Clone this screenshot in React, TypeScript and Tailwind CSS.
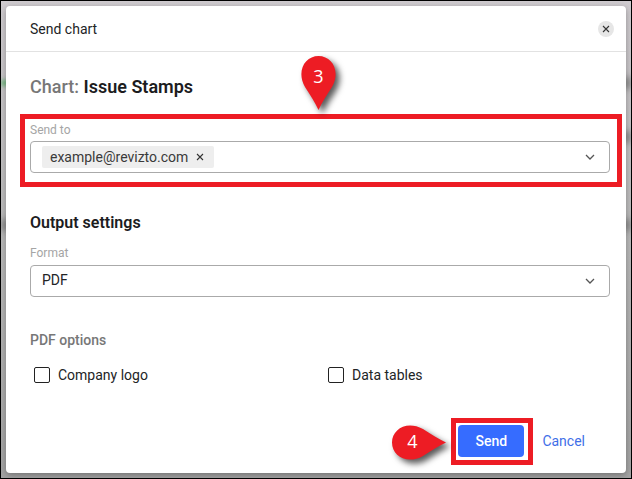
import { useState } from "react";
import type { ReactNode } from "react";

function Chevron() {
  return (
    <svg width="10" height="6" viewBox="0 0 10 6" fill="none" stroke="#555" strokeWidth="1.3" aria-hidden="true">
      <path d="M1 1 5 5 9 1" />
    </svg>
  );
}

function Cross() {
  return (
    <svg width="8" height="8" viewBox="0 0 8 8" fill="none" stroke="#333" strokeWidth="1.1" aria-hidden="true">
      <path d="m1 1 6 6M7 1 1 7" />
    </svg>
  );
}

function Option({ id, children }: { id: string; children: ReactNode }) {
  return (
    <div className="flex items-center gap-2 pl-1">
      <input
        id={id}
        type="checkbox"
        className="size-4 appearance-none rounded-xs border border-[#222] bg-white checked:bg-[#366cff]"
      />
      <label htmlFor={id} className="text-sm">
        {children}
      </label>
    </div>
  );
}

export default function App() {
  const [recipients, setRecipients] = useState(["example@revizto.com"]);

  return (
    <main className="relative min-h-screen overflow-hidden border border-black bg-linear-to-b from-[#cfcbcf] via-[#b9b9b9] to-[#a3a3a3] p-[5px] font-[Roboto,sans-serif] text-[#222426]">
      <span className="absolute top-[79px] left-0 h-1.5 w-2 bg-[#6fb57c] blur-[2px]" />
      <span className="absolute top-[218px] left-0 h-3 w-2 bg-[#888] blur-[3px]" />
      <span className="absolute top-[76px] right-0 h-3 w-2 bg-[#888] blur-[3px]" />
      <span className="absolute top-[130px] right-0 h-3 w-2 bg-[#888] blur-[3px]" />
      <span className="absolute top-[218px] right-0 h-3 w-2 bg-[#888] blur-[3px]" />

      <section
        role="dialog"
        aria-labelledby="title"
        className="relative rounded-[4px] bg-white pb-4 shadow-[0_2px_6px_rgba(0,0,0,0.3)]"
      >
        <header className="flex h-[46px] items-center justify-between border-b border-[#e2e2e2] pr-3 pl-6">
          <h1 id="title" className="text-sm">Send chart</h1>
          <button type="button" aria-label="Close" className="flex size-4 items-center justify-center rounded-full bg-[#e6e6e6]">
            <Cross />
          </button>
        </header>

        <form className="pt-[23px] pr-4 pl-6" onSubmit={(e) => e.preventDefault()}>
          <h2 className="text-lg leading-6 font-medium text-[#777]">
            Chart: <span className="font-semibold text-[#1c1c1e]">Issue Stamps</span>
          </h2>

          <div className="relative mt-[23px]">
            <label htmlFor="recipient" className="block text-xs leading-4 text-[#a5a5a5]">Send to</label>
            <div className="mt-[3px] flex h-8 items-center rounded-[4px] border border-[#aaa] pr-3.5 pl-[11px]">
              {recipients.map((mail) => (
                <span key={mail} className="flex h-[22px] items-center gap-2 rounded-xs bg-[#eee] px-2 pr-2.5 text-sm text-[#3a3a3a]">
                  {mail}
                  <button type="button" aria-label="Remove" onClick={() => setRecipients(recipients.filter((m) => m !== mail))}>
                    <Cross />
                  </button>
                </span>
              ))}
              <input id="recipient" type="email" className="min-w-0 flex-1 px-2 text-sm outline-none" />
              <button type="button" aria-label="Show contacts"><Chevron /></button>
            </div>
            <span className="pointer-events-none absolute -top-2 -right-3 -bottom-3.5 -left-2.5 border-5 border-[#ed1c24]" />
            <span className="pointer-events-none absolute bottom-full left-[271px] mb-2">
              <svg width="48" height="58" viewBox="0 0 48 58" className="block drop-shadow-[4px_4px_3px_rgba(0,0,0,0.65)]" aria-hidden="true">
                <path d="M17.500 54C14 46 9 39 4 31C-5 15 4 0 17.500 0S40 15 31 31C26 39 21 46 17.500 54Z" fill="#ed1c24" />
              </svg>
              <span className="absolute top-2 left-0 w-[35px] text-center font-['Open_Sans',sans-serif] text-lg leading-6 text-white">3</span>
            </span>
          </div>

          <h2 className="mt-[38px] text-base leading-6 font-semibold text-[#1c1c1e]">Output settings</h2>
          <label htmlFor="format" className="mt-2.5 block text-xs leading-4 text-[#a5a5a5]">Format</label>
          <div className="relative mt-1">
            <select id="format" className="block h-8 w-full appearance-none rounded-[4px] border border-[#aaa] bg-white pr-8 pb-0.5 pl-[11px] text-sm">
              <option>PDF</option>
            </select>
            <span className="pointer-events-none absolute inset-y-0 right-[15px] flex items-center"><Chevron /></span>
          </div>

          <fieldset className="mt-[33px]">
            <legend className="text-sm font-medium text-[#777]">PDF options</legend>
            <div className="mt-[15px] grid grid-cols-[294px_1fr]">
              <Option id="logo">Company logo</Option>
              <Option id="tables">Data tables</Option>
            </div>
          </fieldset>

          <footer className="mt-10 flex items-center justify-end gap-[18px] pr-[25px]">
            <div className="relative">
              <button type="submit" className="block h-8 w-[66px] rounded-[4px] bg-[#366cff] text-sm font-medium text-white">Send</button>
              <span className="pointer-events-none absolute -top-[7px] -right-[9px] -bottom-2 -left-[7px] border-5 border-[#ed1c24]" />
              <span className="pointer-events-none absolute top-0 right-full mr-1">
                <svg width="62" height="48" viewBox="0 0 62 48" className="block drop-shadow-[4px_4px_3px_rgba(0,0,0,0.65)]" aria-hidden="true">
                  <path d="M54 17.500C46 14 39 9 31 4C15-5 0 4 0 17.500S15 40 31 31C39 26 46 21 54 17.500Z" fill="#ed1c24" />
                </svg>
                <span className="absolute top-1 left-0 w-10 text-center font-['Open_Sans',sans-serif] text-lg leading-6 text-white">4</span>
              </span>
            </div>
            <button type="button" className="text-sm text-[#3f6fe8]">Cancel</button>
          </footer>
        </form>
      </section>
    </main>
  );
}
